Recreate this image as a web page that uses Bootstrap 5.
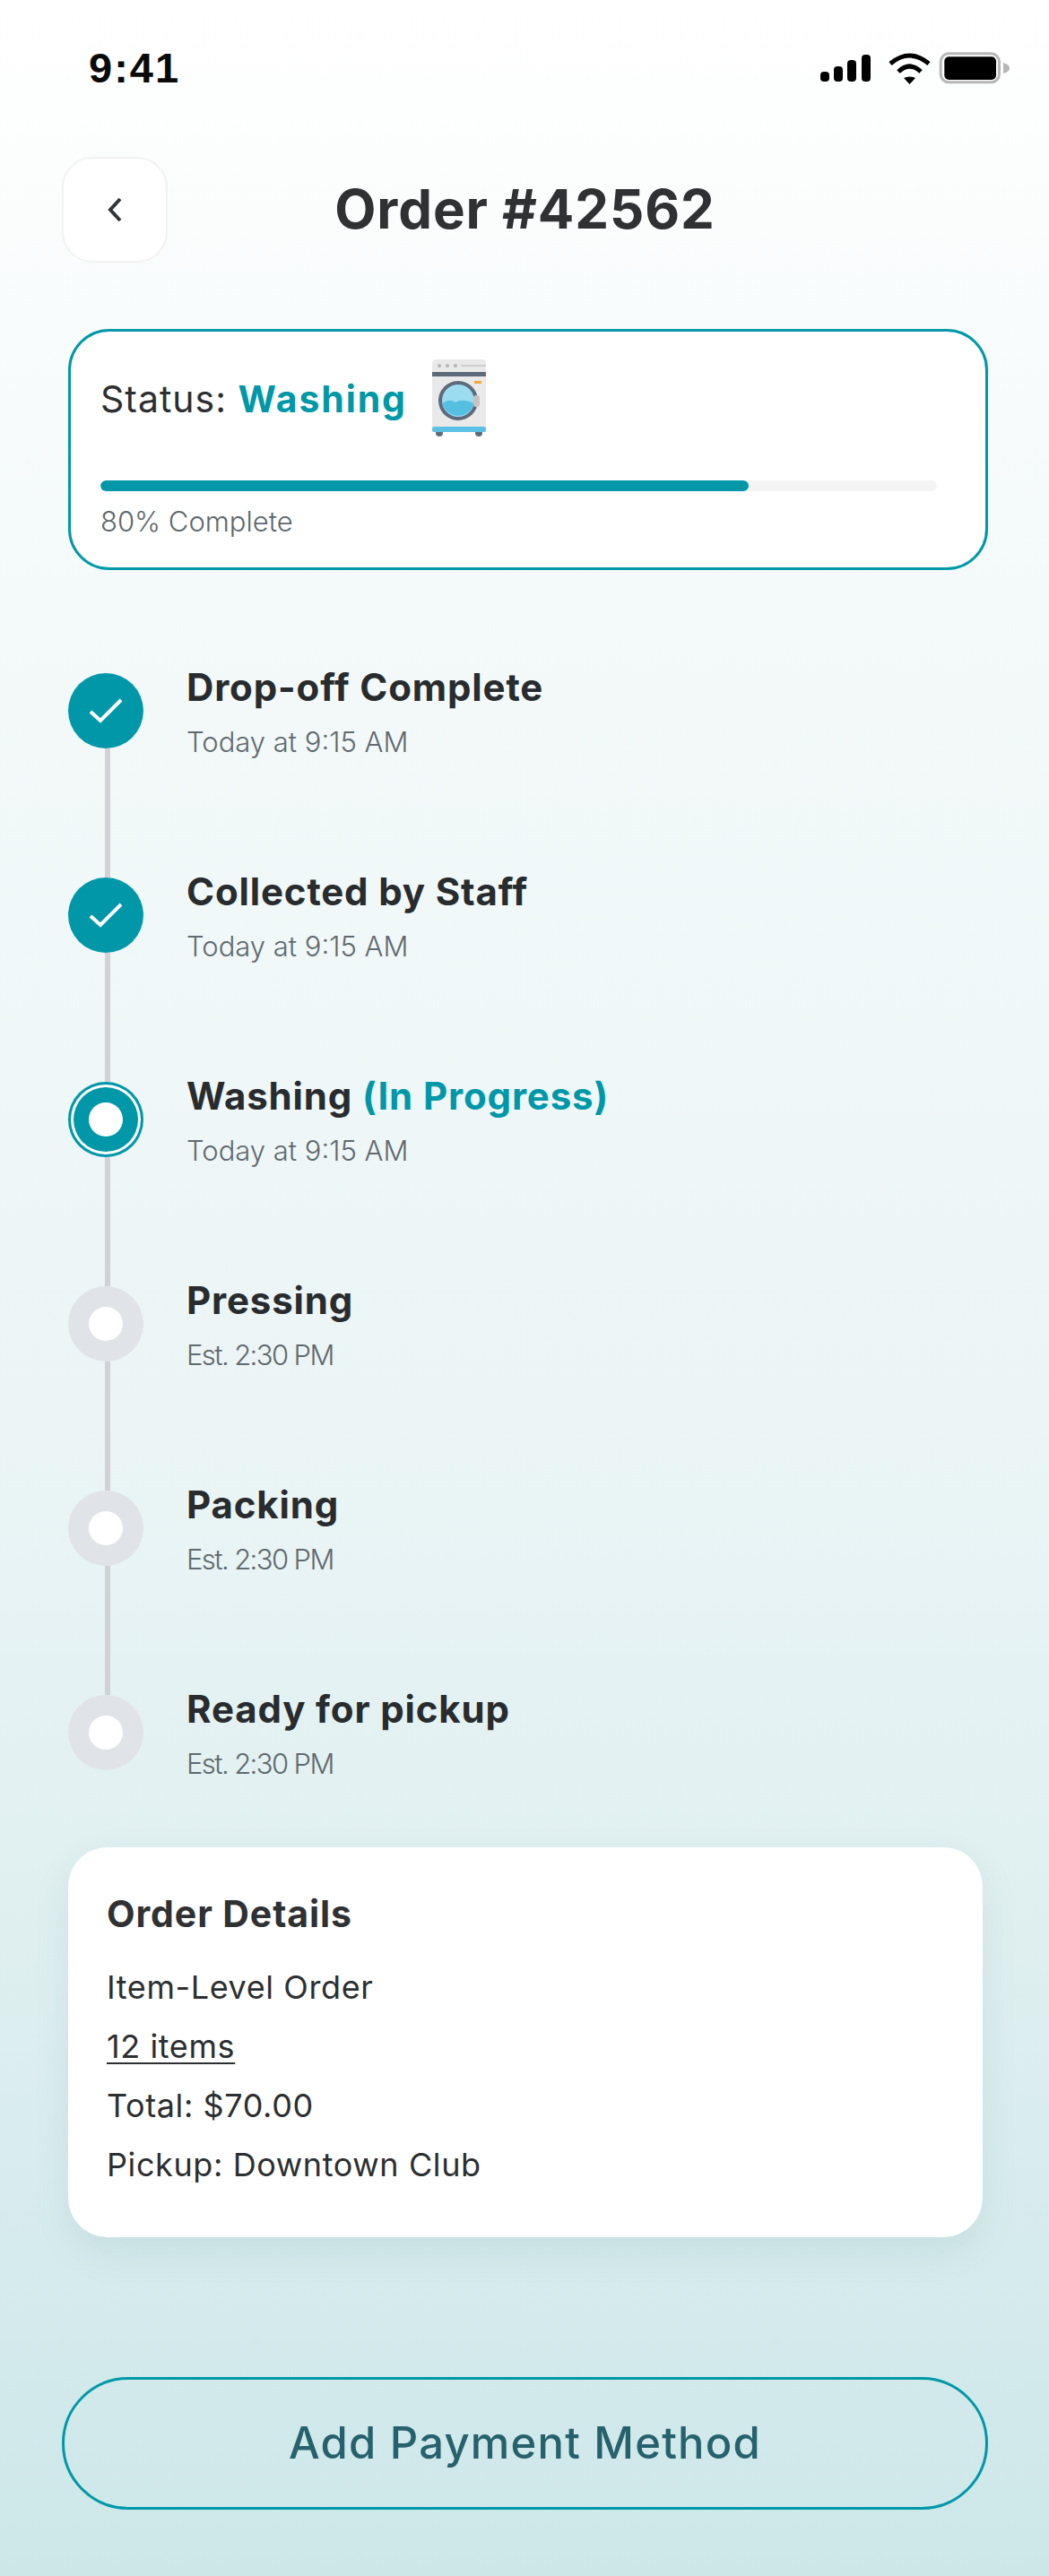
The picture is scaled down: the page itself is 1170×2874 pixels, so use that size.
<!DOCTYPE html>
<html lang="en">
<head>
  <meta charset="utf-8" />
  <title>Order #42562</title>
  <link href="https://cdn.jsdelivr.net/npm/bootstrap@5.3.2/dist/css/bootstrap.min.css" rel="stylesheet" />
  <style>
    body {
      font-family: Inter, "Open Sans", sans-serif;
      color: #2c2f31;
      background: #fff;
    }
    .app-page {
      height: 2874px;
      overflow: hidden;
      padding: 0 68px 0 69px;
      background: linear-gradient(180deg, #ffffff 0%, #f5fafa 20%, #ebf5f6 55%, #dfeff0 75%, #cde7e9 100%);
    }
    .status-strip { height: 175px; padding-top: 58px; padding-left: 30px; margin-right: -24px; }
    .clock {
      font-family: "Liberation Sans", sans-serif;
      font-weight: 700;
      font-size: 47px;
      line-height: 36px;
      letter-spacing: 2px;
      color: #0a0a0a;
    }
    .back-btn {
      width: 118px;
      height: 118px;
      flex: none;
      background: #fff;
      border: 2px solid #f2f2f2;
      border-radius: 34px;
    }
    .page-title {
      font-size: 60px;
      line-height: 117px;
      font-weight: 700;
      letter-spacing: 0.9px;
      color: #2f3133;
      margin: 0;
    }
    .head-spacer { width: 118px; flex: none; }
    .status-card {
      margin: 74px 0 0 7px;
      height: 269px;
      border: 3px solid #0098a8;
      border-radius: 46px;
      padding: 30px 54px 0 33px;
      background: #fff;
    }
    .status-line { height: 87px; font-size: 41px; gap: 27px; }
    .status-text { letter-spacing: 1px; padding-top: 5px; }
    .status-word { font-weight: 700; color: #0098a8; letter-spacing: 1.9px; }
    .wash-progress { height: 12px; margin-top: 49px; background: #f4f4f4; border-radius: 6px; }
    .wash-progress .progress-bar { background: #0098a8; border-radius: 6px; }
    .percent-text { margin-top: 14px; font-size: 31px; line-height: 40px; font-weight: 300; color: #5d686d; }
    .track { margin: 115px 0 0 7px; }
    .track-step { height: 228px; gap: 48px; }
    .track-step.last-step { height: 97px; }
    .dot-col { width: 84px; flex: none; }
    .track-dot { width: 84px; height: 84px; flex: none; border-radius: 50%; }
    .dot-done { background: #0098a8; }
    .dot-now { background: #0098a8; box-shadow: inset 0 0 0 3px #0098a8, inset 0 0 0 6px #fff; }
    .dot-next { background: #e0e4e8; }
    .dot-hole { width: 38px; height: 38px; border-radius: 50%; background: #fff; }
    .track-line { width: 6px; flex-grow: 1; margin-left: 41px; background: #d2d1d6; }
    .step-title { font-size: 42px; line-height: 32px; font-weight: 700; letter-spacing: 0.85px; color: #282c2f; margin: 0; }
    .step-title span { color: #0098a8; }
    .step-time { margin-top: 25px; font-size: 31px; line-height: 40px; font-weight: 300; color: #5f6a70; }
    .step-time.est-time { letter-spacing: -1.6px; }
    .details-card {
      margin: 73px 6px 0 7px;
      height: 435px;
      border: 0;
      border-radius: 44px;
      padding: 54px 43px 48px;
      box-shadow: 0 16px 40px rgba(60, 120, 130, 0.1);
    }
    .details-title { font-size: 41px; line-height: 40px; font-weight: 700; letter-spacing: 0.9px; color: #2f3133; margin: 0 0 29px; }
    .details-list li { font-size: 36px; line-height: 66px; font-weight: 400; letter-spacing: 0.6px; color: #2c2f31; }
    .details-list u { text-underline-offset: 5px; text-decoration-thickness: 2px; }
    .pay-btn {
      margin-top: 156px;
      height: 148px;
      border: 3px solid #0098a8;
      border-radius: 74px;
      font-size: 49px;
      font-weight: 500;
      letter-spacing: 1.2px;
      color: #26626e;
      background: transparent;
    }
  </style>
</head>
<body>
  <div class="app-page">
    <div class="status-strip d-flex justify-content-between align-items-start">
      <div class="clock">9:41</div>
      <svg width="211" height="37" viewBox="0 0 211 37">
        <g fill="#000">
          <rect x="0" y="22" width="10" height="11" rx="4" />
          <rect x="15" y="16" width="10" height="17" rx="4" />
          <rect x="30" y="9" width="10" height="24" rx="4" />
          <rect x="46" y="3" width="10" height="30" rx="4" />
          <path d="M 93 29 Q 99.5 26 106 29 L 99.5 36 Z" />
        </g>
        <g fill="none" stroke="#000" stroke-width="5">
          <path d="M 78 13 Q 99.5 -5 121 13" />
          <path d="M 87 22 Q 99.5 10 112 22" />
        </g>
        <rect x="134.2" y="1.8" width="65.3" height="32" rx="9" fill="none" stroke="#b7b7b7" stroke-width="3" />
        <rect x="138.3" y="5.3" width="57.7" height="25.7" rx="5" fill="#000" />
        <path d="M 204 12 Q 211 14 211 18 Q 211 22 204 24 Z" fill="#b7b7b7" />
      </svg>
    </div>

    <div class="d-flex align-items-start">
      <button class="back-btn btn p-0 d-flex align-items-center justify-content-center" type="button" aria-label="Back">
        <svg width="18" height="30" viewBox="0 0 18 30"><path d="M 15 3 L 4 15 L 15 27" fill="none" stroke="#333638" stroke-width="4" /></svg>
      </button>
      <h1 class="page-title flex-grow-1 text-center">Order #42562</h1>
      <div class="head-spacer"></div>
    </div>

    <div class="status-card">
      <div class="status-line d-flex align-items-center">
        <div class="status-text">Status: <span class="status-word">Washing</span></div>
        <svg width="62" height="87" viewBox="0 0 62 87">
          <circle cx="9" cy="83" r="4" fill="#5f6b7a" />
          <circle cx="53" cy="83" r="4" fill="#5f6b7a" />
          <path d="M 1 6 Q 1 1 6 1 H 56 Q 61 1 61 6 V 80 H 1 Z" fill="#e9e9e9" />
          <rect x="1" y="15" width="60" height="5" fill="#5c6a79" />
          <rect x="1" y="76" width="60" height="6" rx="2" fill="#5cc0e4" />
          <circle cx="9" cy="8" r="2" fill="#b5b5b5" />
          <circle cx="18" cy="8" r="2" fill="#b5b5b5" />
          <circle cx="27" cy="8" r="2" fill="#b5b5b5" />
          <rect x="33" y="7" width="28" height="2" fill="#cfcfcf" />
          <rect x="48" y="25" width="8" height="3" fill="#f2a93b" />
          <circle cx="30" cy="47" r="22" fill="#5c6a79" />
          <circle cx="30" cy="47" r="18" fill="#9bdcf1" />
          <path d="M 12.5 50 Q 20 44 27 49 Q 34 44 47.5 50 A 18 18 0 0 1 12.5 50 Z" fill="#55bfe2" />
          <rect x="47" y="41" width="7" height="13" rx="3" fill="#c4c4c4" />
        </svg>
      </div>
      <div class="progress wash-progress">
        <div class="progress-bar" style="width: 77.5%"></div>
      </div>
      <div class="percent-text">80% Complete</div>
    </div>

    <div class="track">
      <div class="track-step d-flex">
        <div class="dot-col d-flex flex-column">
          <div class="track-dot dot-done d-flex align-items-center justify-content-center">
            <svg width="40" height="30" viewBox="0 0 40 30"><path d="M 3 16 L 14 26 L 37 3" fill="none" stroke="#fff" stroke-width="4" /></svg>
          </div>
          <div class="track-line"></div>
        </div>
        <div>
          <h2 class="step-title">Drop-off Complete</h2>
          <div class="step-time">Today at 9:15 AM</div>
        </div>
      </div>
      <div class="track-step d-flex">
        <div class="dot-col d-flex flex-column">
          <div class="track-dot dot-done d-flex align-items-center justify-content-center">
            <svg width="40" height="30" viewBox="0 0 40 30"><path d="M 3 16 L 14 26 L 37 3" fill="none" stroke="#fff" stroke-width="4" /></svg>
          </div>
          <div class="track-line"></div>
        </div>
        <div>
          <h2 class="step-title">Collected by Staff</h2>
          <div class="step-time">Today at 9:15 AM</div>
        </div>
      </div>
      <div class="track-step d-flex">
        <div class="dot-col d-flex flex-column">
          <div class="track-dot dot-now d-flex align-items-center justify-content-center"><div class="dot-hole"></div></div>
          <div class="track-line"></div>
        </div>
        <div>
          <h2 class="step-title">Washing <span>(In Progress)</span></h2>
          <div class="step-time">Today at 9:15 AM</div>
        </div>
      </div>
      <div class="track-step d-flex">
        <div class="dot-col d-flex flex-column">
          <div class="track-dot dot-next d-flex align-items-center justify-content-center"><div class="dot-hole"></div></div>
          <div class="track-line"></div>
        </div>
        <div>
          <h2 class="step-title">Pressing</h2>
          <div class="step-time est-time">Est. 2:30 PM</div>
        </div>
      </div>
      <div class="track-step d-flex">
        <div class="dot-col d-flex flex-column">
          <div class="track-dot dot-next d-flex align-items-center justify-content-center"><div class="dot-hole"></div></div>
          <div class="track-line"></div>
        </div>
        <div>
          <h2 class="step-title">Packing</h2>
          <div class="step-time est-time">Est. 2:30 PM</div>
        </div>
      </div>
      <div class="track-step last-step d-flex">
        <div class="dot-col d-flex flex-column">
          <div class="track-dot dot-next d-flex align-items-center justify-content-center"><div class="dot-hole"></div></div>
        </div>
        <div>
          <h2 class="step-title">Ready for pickup</h2>
          <div class="step-time est-time">Est. 2:30 PM</div>
        </div>
      </div>
    </div>

    <div class="card details-card">
      <h3 class="details-title">Order Details</h3>
      <ul class="details-list list-unstyled mb-0">
        <li>Item-Level Order</li>
        <li><u>12 items</u></li>
        <li>Total: $70.00</li>
        <li>Pickup: Downtown Club</li>
      </ul>
    </div>

    <button class="btn pay-btn w-100" type="button">Add Payment Method</button>
  </div>

  <script src="https://cdn.jsdelivr.net/npm/bootstrap@5.3.2/dist/js/bootstrap.bundle.min.js"></script>
</body>
</html>
